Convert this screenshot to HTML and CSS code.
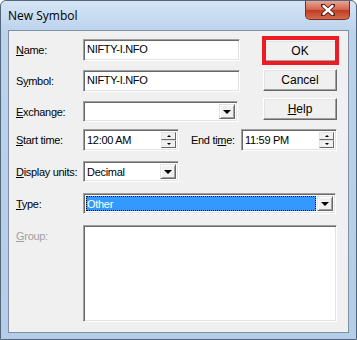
FILE: index.html
```html
<!DOCTYPE html>
<html lang="en">
<head>
    <meta charset="UTF-8">
    <meta name="viewport" content="width=device-width, initial-scale=1.0">
    <title>New Symbol</title>
    <link rel="stylesheet" href="styles.css">
</head>
<body>
    <div class="window">
        <div class="titlebar">
            <span class="title">New Symbol</span>
            <div class="close">
                <svg width="14" height="12" viewBox="0 0 14 12">
                    <path d="M2 1.5 L12 10.5 M12 1.5 L2 10.5" stroke="#4a1a12" stroke-width="4.2" stroke-linecap="round"/>
                    <path d="M2.5 2 L11.5 10 M11.5 2 L2.5 10" stroke="#fff" stroke-width="2.4" stroke-linecap="round"/>
                </svg>
            </div>
        </div>
        <div class="client">
            <div class="top">
                <div class="fields">
                    <div class="row">
                        <label class="lbl"><u>N</u>ame:</label>
                        <div class="edit w-name">NIFTY-I.NFO</div>
                    </div>
                    <div class="row">
                        <label class="lbl">S<u>y</u>mbol:</label>
                        <div class="edit w-name">NIFTY-I.NFO</div>
                    </div>
                    <div class="row row-combo">
                        <label class="lbl"><u>E</u>xchange:</label>
                        <div class="edit combo w-exch">
                            <span class="value"></span>
                            <span class="drop"><span class="tri"></span></span>
                        </div>
                    </div>
                </div>
                <div class="buttons">
                    <div class="btn btn-ok">OK</div>
                    <div class="btn">Cancel</div>
                    <div class="btn"><u>H</u>elp</div>
                </div>
            </div>

            <div class="row row-time">
                <label class="lbl"><u>S</u>tart time:</label>
                <div class="edit spin w-time">
                    <span class="value">12:00 AM</span>
                    <span class="spinner"><span class="sb"><span class="up"></span></span><span class="sb"><span class="dn"></span></span></span>
                </div>
                <label class="lbl lbl-end">End ti<u>m</u>e:</label>
                <div class="edit spin w-time">
                    <span class="value">11:59 PM</span>
                    <span class="spinner"><span class="sb"><span class="up"></span></span><span class="sb"><span class="dn"></span></span></span>
                </div>
            </div>

            <div class="row row-combo row-display">
                <label class="lbl"><u>D</u>isplay units:</label>
                <div class="edit combo w-time">
                    <span class="value">Decimal</span>
                    <span class="drop"><span class="tri"></span></span>
                </div>
            </div>

            <div class="row row-combo row-type">
                <label class="lbl"><u>T</u>ype:</label>
                <div class="edit combo w-type">
                    <span class="value selected">Other</span>
                    <span class="drop"><span class="tri"></span></span>
                </div>
            </div>

            <div class="row row-group">
                <label class="lbl disabled"><u>G</u>roup:</label>
                <div class="edit w-group"></div>
            </div>
        </div>
    </div>
</body>
</html>
```

FILE: styles.css
```css
body {
    margin: 0;
    background-color: #fff;
    font-family: "Liberation Sans", Arial, sans-serif;
    font-size: 11px;
    color: #000;
}
.window {
    width: 357px;
    height: 340px;
    box-sizing: border-box;
    border: 1px solid #52677f;
    border-radius: 6px 6px 0 0;
    background: linear-gradient(#d6e5f5, #bcd3ec 30px, #b4cde8);
    padding: 0 7px 6px 7px;
    display: flex;
    flex-direction: column;
}
.titlebar {
    height: 29px;
    display: flex;
    align-items: flex-start;
    justify-content: space-between;
}
.title {
    font-family: "Open Sans", "Noto Sans", sans-serif;
    font-size: 12px;
    margin-top: 6px;
    color: #000;
}
.close {
    width: 45px;
    height: 19px;
    margin-right: -1px;
    box-sizing: border-box;
    border: 1px solid #7a2d22;
    border-top: none;
    border-radius: 0 0 5px 5px;
    background: linear-gradient(#e8a595, #d3614a 50%, #c13b22 51%, #d36c4e);
    display: flex;
    align-items: center;
    justify-content: center;
}
.client {
    flex: 1;
    background-color: #f0f0f0;
    border: 1px solid #7f90a5;
    padding: 8px 0 0 7px;
}
.top {
    display: flex;
}
.fields {
    display: flex;
    flex-direction: column;
    gap: 9px;
}
.row {
    display: flex;
    align-items: center;
    height: 22px;
}
.row-combo {
    height: 21px;
}
.lbl {
    width: 67px;
    flex-shrink: 0;
    letter-spacing: -0.3px;
}
.lbl-end {
    width: 50px;
    margin-left: 12px;
}
.disabled {
    color: #a0a0a0;
}
.edit {
    box-sizing: border-box;
    height: 100%;
    background-color: #fff;
    border: 1px solid;
    border-color: #a0a0a0 #fff #fff #a0a0a0;
    box-shadow: inset 1px 1px #696969, inset -1px -1px #e3e3e3;
    padding: 3px 2px 0 3px;
    font-size: 11px;
    letter-spacing: -0.3px;
    white-space: nowrap;
}
.w-name { width: 157px; }
.w-exch { width: 155px; }
.w-time { width: 96px; }
.w-type { width: 253px; }
.w-group { width: 254px; height: 97px; }
.combo, .spin {
    display: flex;
    padding: 2px;
}
.combo .value, .spin .value {
    flex: 1;
    padding: 2px 0 0 1px;
}
.drop {
    width: 16px;
    box-sizing: border-box;
    border: 1px solid;
    border-color: #e3e3e3 #696969 #696969 #e3e3e3;
    box-shadow: inset 1px 1px #fff, inset -1px -1px #a0a0a0;
    background-color: #f0f0f0;
    display: flex;
    align-items: center;
    justify-content: center;
}
.tri {
    width: 0;
    height: 0;
    border-left: 4px solid transparent;
    border-right: 4px solid transparent;
    border-top: 4px solid #000;
}
.selected {
    background-color: #3399ff;
    color: #fff;
    outline: 1px dotted #000;
    outline-offset: -1px;
    margin-right: 1px;
}
.spinner {
    width: 15px;
    display: flex;
    flex-direction: column;
}
.sb {
    flex: 1;
    box-sizing: border-box;
    border: 1px solid;
    border-color: #e3e3e3 #696969 #696969 #e3e3e3;
    background-color: #f0f0f0;
    display: flex;
    align-items: center;
    justify-content: center;
}
.up, .dn {
    width: 0;
    height: 0;
    border-left: 2px solid transparent;
    border-right: 2px solid transparent;
}
.up { border-bottom: 2px solid #000; }
.dn { border-top: 2px solid #000; }
.buttons {
    margin-left: 23px;
    display: flex;
    flex-direction: column;
    gap: 7px;
    padding-top: 1px;
}
.btn {
    position: relative;
    width: 74px;
    height: 22px;
    box-sizing: border-box;
    border: 1px solid;
    border-color: #fff #696969 #696969 #fff;
    box-shadow: inset -1px -1px #a0a0a0, inset 1px 1px #e3e3e3;
    background-color: #f0f0f0;
    display: flex;
    align-items: center;
    justify-content: center;
    font-size: 12px;
}
/* red highlight drawn over the default button */
.btn-ok::after {
    content: "";
    position: absolute;
    left: -2px;
    right: -3px;
    top: -5px;
    bottom: -4px;
    border: 4px solid #ed1c24;
}
.row-time {
    margin-top: 7px;
}
.row-display {
    margin-top: 10px;
}
.row-type {
    margin-top: 11px;
}
.row-group {
    margin-top: 11px;
    height: 97px;
    align-items: flex-start;
}
.row-group .lbl {
    margin-top: 5px;
}
```
